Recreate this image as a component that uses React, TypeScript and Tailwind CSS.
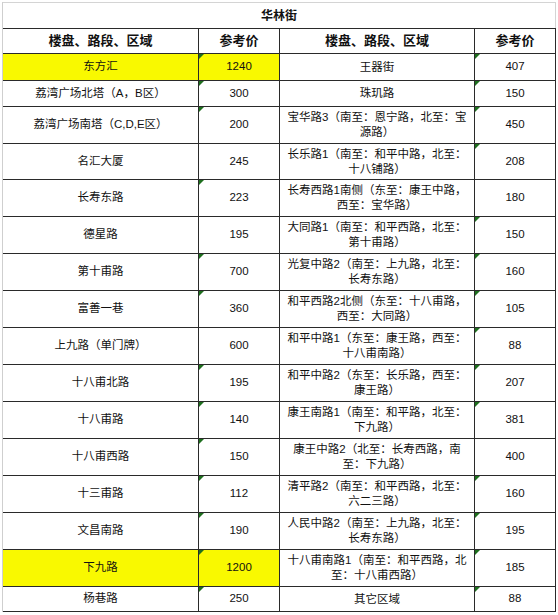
import React from "react";

type Row = {
  a: string;
  b: string;
  c: string[];
  d: string;
  h: string;
  yellow?: boolean;
  tb?: boolean;
  td?: boolean;
};

const rows: Row[] = [
  { a: "东方汇", b: "1240", c: ["王器街"], d: "407", h: "h-[27px]", yellow: true, tb: true, td: true },
  { a: "荔湾广场北塔（A，B区）", b: "300", c: ["珠玑路"], d: "150", h: "h-[26px]", tb: true, td: true },
  { a: "荔湾广场南塔（C,D,E区）", b: "200", c: ["宝华路3（南至：恩宁路，北至：宝", "源路）"], d: "450", h: "h-[37px]", tb: true, td: true },
  { a: "名汇大厦", b: "245", c: ["长乐路1（南至：和平中路，北至：", "十八铺路）"], d: "208", h: "h-[36px]", td: true },
  { a: "长寿东路", b: "223", c: ["长寿西路1南侧（东至：康王中路，", "西至：宝华路）"], d: "180", h: "h-[37px]", tb: true },
  { a: "德星路", b: "195", c: ["大同路1（南至：和平西路，北至：", "第十甫路）"], d: "150", h: "h-[37px]", td: true },
  { a: "第十甫路", b: "700", c: ["光复中路2（南至：上九路，北至：", "长寿东路）"], d: "160", h: "h-[37px]", tb: true, td: true },
  { a: "富善一巷", b: "360", c: ["和平西路2北侧（东至：十八甫路，", "西至：大同路）"], d: "105", h: "h-[37px]", tb: true, td: true },
  { a: "上九路（单门牌）", b: "600", c: ["和平中路1（东至：康王路，西至：", "十八甫南路）"], d: "88", h: "h-[37px]", td: true },
  { a: "十八甫北路", b: "195", c: ["和平中路2（东至：长乐路，西至：", "康王路）"], d: "207", h: "h-[37px]", tb: true, td: true },
  { a: "十八甫路", b: "140", c: ["康王南路1（南至：和平路，北至：", "下九路）"], d: "381", h: "h-[37px]", tb: true, td: true },
  { a: "十八甫西路", b: "150", c: ["康王中路2（北至：长寿西路，南", "至：下九路）"], d: "400", h: "h-[37px]", tb: true },
  { a: "十三甫路", b: "112", c: ["清平路2（南至：和平西路，北至：", "六二三路）"], d: "160", h: "h-[37px]", tb: true, td: true },
  { a: "文昌南路", b: "190", c: ["人民中路2（南至：上九路，北至：", "长寿东路）"], d: "195", h: "h-[37px]", tb: true, td: true },
  { a: "下九路", b: "1200", c: ["十八甫南路1（南至：和平西路，北", "至：十八甫西路）"], d: "185", h: "h-[37px]", yellow: true, tb: true, td: true },
  { a: "杨巷路", b: "250", c: ["其它区域"], d: "88", h: "h-[26px]", tb: true, td: true },
];

function Tri() {
  return (
    <span className="absolute left-0 top-0 w-0 h-0 border-t-[5px] border-r-[5px] border-t-[#1e6f1e] border-r-transparent" />
  );
}

export default function App() {
  return (
    <div
      className="w-[558px] h-[615px] bg-white text-[#111]"
      style={{ fontFamily: '"Liberation Sans", "Noto Sans CJK SC", sans-serif' }}
    >
      <div className="ml-[2px] pt-[2px] w-[554px]">
        <div className="border-l border-[#cfcfcf]">
          <div className="h-[26px] border-t border-r border-[#d4d4d4] flex items-center justify-center text-[12px] font-bold">
            华林街
          </div>
          <div className="h-[25px] flex border-t border-[#2a2a2a] text-[13px] font-bold">
            <div className="w-[196px] border-r border-[#2a2a2a] flex items-center justify-center">楼盘、路段、区域</div>
            <div className="w-[81px] border-r border-[#2a2a2a] flex items-center justify-center">参考价</div>
            <div className="w-[195px] border-r border-[#2a2a2a] flex items-center justify-center">楼盘、路段、区域</div>
            <div className="w-[81px] border-r border-[#2a2a2a] flex items-center justify-center">参考价</div>
          </div>
          {rows.map((r, i) => (
            <div
              key={i}
              className={`${r.h} flex border-t border-[#2a2a2a] text-[11.5px] ${i === rows.length - 1 ? "border-b" : ""}`}
            >
              <div
                className={`w-[196px] border-r border-[#2a2a2a] flex items-center justify-center ${r.yellow ? "bg-[#f9f900]" : ""}`}
              >
                {r.a}
              </div>
              <div
                className={`relative w-[81px] border-r border-[#2a2a2a] flex items-center justify-center ${r.yellow ? "bg-[#f9f900]" : ""}`}
              >
                {r.tb && <Tri />}
                {r.b}
              </div>
              <div className="w-[195px] border-r border-[#2a2a2a] flex flex-col items-center justify-center leading-[15px] whitespace-nowrap">
                {r.c.map((l, j) => (
                  <span key={j}>{l}</span>
                ))}
              </div>
              <div className="relative w-[81px] border-r border-[#2a2a2a] flex items-center justify-center">
                {r.td && <Tri />}
                {r.d}
              </div>
            </div>
          ))}
        </div>
      </div>
    </div>
  );
}
